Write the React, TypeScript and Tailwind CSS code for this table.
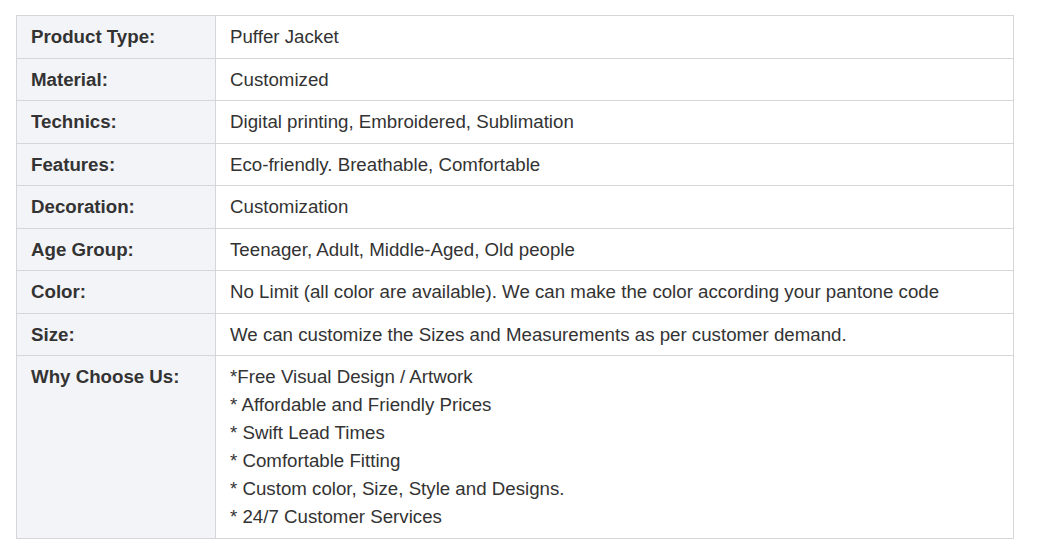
const rows: [string, string][] = [
  ["Product Type:", "Puffer Jacket"],
  ["Material:", "Customized"],
  ["Technics:", "Digital printing, Embroidered, Sublimation"],
  ["Features:", "Eco-friendly. Breathable, Comfortable"],
  ["Decoration:", "Customization"],
  ["Age Group:", "Teenager, Adult, Middle-Aged, Old people"],
  ["Color:", "No Limit (all color are available). We can make the color according your pantone code"],
  ["Size:", "We can customize the Sizes and Measurements as per customer demand."],
];

const reasons = [
  "*Free Visual Design / Artwork",
  "* Affordable and Friendly Prices",
  "* Swift Lead Times",
  "* Comfortable Fitting",
  "* Custom color, Size, Style and Designs.",
  "* 24/7 Customer Services",
];

export default function App() {
  return (
    <div className="bg-white w-[1060px] h-[547px] pt-[15px] pl-4 font-['Liberation_Sans',Arial,sans-serif] text-[18.7px] text-[#333]">
      <table className="w-[998px] border-collapse border border-[#d6d6d6]">
        <tbody>
          {rows.map(([label, value]) => (
            <tr key={label} className="border-b border-[#d6d6d6]">
              <td className="w-[199px] bg-[#f3f4f7] pl-[14px] pr-2 py-[7px] leading-[27.5px] font-bold align-top border-r border-[#d6d6d6]">
                {label}
              </td>
              <td className="px-[14px] py-[7px] leading-[27.5px] align-top">{value}</td>
            </tr>
          ))}
          {/* last row holds the list */}
          <tr>
            <td className="w-[199px] bg-[#f3f4f7] pl-[14px] pr-2 py-[7px] leading-[28px] font-bold align-top border-r border-[#d6d6d6]">
              Why Choose Us:
            </td>
            <td className="px-[14px] py-[7px] leading-[28px] align-top">
              {reasons.map((r) => (
                <div key={r}>{r}</div>
              ))}
            </td>
          </tr>
        </tbody>
      </table>
    </div>
  );
}
